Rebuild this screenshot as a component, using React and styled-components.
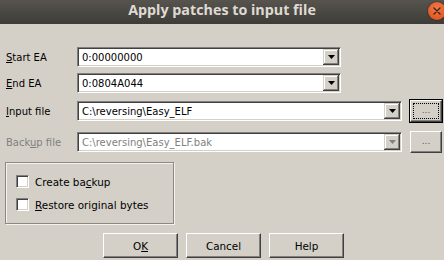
import React from "react";
import styled, { createGlobalStyle, css } from "styled-components";

const Global = createGlobalStyle`
  html, body { margin: 0; padding: 0; background: #d4d0c8; }
  body { font-family: "DejaVu Sans", "Liberation Sans", sans-serif; }
  * { box-sizing: border-box; }
`;

const Window = styled.div`
  width: 444px;
  height: 260px;
  overflow: hidden;
  background: #d4d0c8;
  display: flex;
  flex-direction: column;
`;

const TitleBar = styled.div`
  position: relative;
  height: 24px;
  flex: none;
  background: linear-gradient(#57544e, #3d3c38);
  display: flex;
  align-items: center;
  justify-content: center;
`;

const Title = styled.div`
  font-family: "Open Sans", "DejaVu Sans", sans-serif;
  font-weight: 700;
  font-size: 14.3px;
  line-height: 1;
  color: #dfdbd2;
  margin-top: -4px;
`;

const CloseBtn = styled.div`
  position: absolute;
  left: 428px;
  top: 2px;
  width: 18px;
  height: 18px;
  border-radius: 50%;
  background: radial-gradient(circle at 50% 35%, #f47a48, #e25a26 70%, #cc4a18);
  box-shadow: 0 0 0 1px rgba(40, 20, 10, 0.3);
  display: flex;
  align-items: center;
  justify-content: center;
`;

const Form = styled.div`
  display: flex;
  flex-direction: column;
  padding: 23px 0 0 5px;
  font-size: 10px;
`;

const Row = styled.div`
  display: grid;
  grid-template-columns: 66px auto auto;
  column-gap: 6px;
  align-items: center;
  height: ${(p) => p.$h}px;
  margin-top: ${(p) => p.$mt}px;
`;

const Label = styled.label`
  padding-left: 1px;
  color: ${(p) => (p.$disabled ? "#808080" : "#000")};
  font-size: 10px;
  white-space: nowrap;
`;

const Combo = styled.div`
  width: ${(p) => p.$w}px;
  height: 20px;
  background: #fff;
  border: 1px solid;
  border-color: #808080 #fff #fff #808080;
  box-shadow: inset 1px 1px #404040, inset -1px -1px #d4d0c8;
  display: flex;
  align-items: center;
  padding: 1px 1px 1px 4px;
`;

const ComboText = styled.span`
  flex: 1;
  font-size: 10px;
  line-height: 15px;
  color: ${(p) => (p.$disabled ? "#808080" : "#000")};
  white-space: nowrap;
  overflow: hidden;
`;

const DropBtn = styled.div`
  width: 16px;
  height: 16px;
  flex: none;
  background: #d4d0c8;
  box-shadow: inset -1px -1px #404040, inset 1px 1px #d4d0c8,
    inset -2px -2px #808080, inset 2px 2px #fff;
  display: flex;
  align-items: center;
  justify-content: center;
  padding-bottom: 1px;
`;

const raised = css`
  background: #d4d0c8;
  border: 1px solid;
  border-color: #fff #404040 #404040 #fff;
  box-shadow: inset -1px -1px #808080;
`;

const BrowseWrap = styled.div`
  width: 34px;
  height: 24px;
  border: 1px solid ${(p) => (p.$focused ? "#000" : "transparent")};
  display: flex;
`;

const BrowseBtn = styled.button`
  ${raised};
  flex: 1;
  padding: 2px;
  display: flex;
`;

const FocusRing = styled.div`
  flex: 1;
  border: 1px dotted ${(p) => (p.$show ? "#000" : "transparent")};
  display: flex;
  align-items: flex-end;
  justify-content: center;
  font-family: "DejaVu Sans", sans-serif;
  font-size: 9px;
  line-height: 1;
  padding-bottom: 3px;
  color: #555;
`;

const GroupBox = styled.div`
  margin-top: 8px;
  width: 169px;
  height: 62px;
  border: 1px solid #8c8983;
  box-shadow: inset 1px 1px #f4f2ee, 1px 1px #f4f2ee;
  display: flex;
  flex-direction: column;
  gap: 10px;
  padding: 12px 0 0 10px;
`;

const CheckRow = styled.div`
  display: flex;
  align-items: center;
  gap: 6px;
  height: 13px;
  font-size: 10.4px;
  color: #000;
`;

const CheckBox = styled.span`
  width: 13px;
  height: 13px;
  flex: none;
  background: #fff;
  border: 1px solid;
  border-color: #808080 #fff #fff #808080;
  box-shadow: inset 1px 1px #404040, inset -1px -1px #d4d0c8;
`;

const ButtonRow = styled.div`
  margin-top: 9px;
  display: flex;
  justify-content: center;
  gap: 8px;
  padding-left: 3px;
`;

const PushButton = styled.button`
  ${raised};
  width: 75px;
  height: 25px;
  font-family: "DejaVu Sans", sans-serif;
  font-size: 10.4px;
  color: #000;
  padding: 0;
`;

const U = styled.span`
  text-decoration: underline;
  text-underline-offset: 1px;
`;

const Arrow = ({ disabled }) => (
  <svg width="7" height="4" viewBox="0 0 7 4">
    <polygon points="0,0 7,0 3.5,4" fill={disabled ? "#808080" : "#000"} />
  </svg>
);

const ComboBox = ({ w, value, disabled }) => (
  <Combo $w={w}>
    <ComboText $disabled={disabled}>{value}</ComboText>
    <DropBtn>
      <Arrow disabled={disabled} />
    </DropBtn>
  </Combo>
);

const Browse = ({ focused }) => (
  <BrowseWrap $focused={focused}>
    <BrowseBtn>
      <FocusRing $show={focused}>...</FocusRing>
    </BrowseBtn>
  </BrowseWrap>
);

export default function App() {
  return (
    <>
      <Global />
      <Window>
        <TitleBar>
          <Title>Apply patches to input file</Title>
          <CloseBtn>
            <svg width="8" height="8" viewBox="0 0 8 8">
              <path d="M1 1 L7 7 M7 1 L1 7" stroke="#3a2418" strokeWidth="1.4" strokeLinecap="round" />
            </svg>
          </CloseBtn>
        </TitleBar>
        <Form>
          <Row $h={20} $mt={0}>
            <Label>
              <U>S</U>tart EA
            </Label>
            <ComboBox w={264} value="0:00000000" />
          </Row>
          <Row $h={20} $mt={6}>
            <Label>
              <U>E</U>nd EA
            </Label>
            <ComboBox w={264} value="0:0804A044" />
          </Row>
          <Row $h={24} $mt={6}>
            <Label>
              <U>I</U>nput file
            </Label>
            <ComboBox w={325} value="C:\reversing\Easy_ELF" />
            <Browse focused />
          </Row>
          <Row $h={24} $mt={7}>
            <Label $disabled>
              Back<U>u</U>p file
            </Label>
            <ComboBox w={325} value="C:\reversing\Easy_ELF.bak" disabled />
            <Browse />
          </Row>
          <GroupBox>
            <CheckRow>
              <CheckBox />
              <span>
                Create ba<U>c</U>kup
              </span>
            </CheckRow>
            <CheckRow>
              <CheckBox />
              <span>
                <U>R</U>estore original bytes
              </span>
            </CheckRow>
          </GroupBox>
        </Form>
        <ButtonRow>
          <PushButton>
            O<U>K</U>
          </PushButton>
          <PushButton>Cancel</PushButton>
          <PushButton>Help</PushButton>
        </ButtonRow>
      </Window>
    </>
  );
}
